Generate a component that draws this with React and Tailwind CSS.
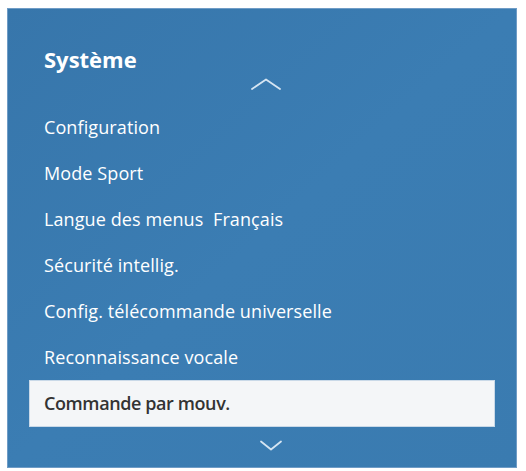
import React from 'react';

const ITEMS = [
  'Configuration',
  'Mode Sport',
  'Langue des menus  Français',
  'Sécurité intellig.',
  'Config. télécommande universelle',
  'Reconnaissance vocale',
];

const ChevronUp = () => (
  <svg width="32" height="12" viewBox="0 0 32 12" fill="none">
    <path d="M2 11 L16 1.5 L30 11" stroke="#d6e5f2" strokeWidth="1.8" strokeLinecap="round" strokeLinejoin="round" />
  </svg>
);

const ChevronDown = () => (
  <svg width="24" height="11" viewBox="0 0 24 11" fill="none">
    <path d="M2 1.5 L12 9.5 L22 1.5" stroke="#d6e5f2" strokeWidth="1.8" strokeLinecap="round" strokeLinejoin="round" />
  </svg>
);

export default function App() {
  return (
    <div className="w-[526px] h-[471px] bg-white pt-[8px] pl-[7px]" style={{ fontFamily: '"Open Sans", "Noto Sans", sans-serif' }}>
      <div className="w-[510px] h-[460px] bg-gradient-to-br from-[#3776ab] via-[#3b7db3] to-[#3a7bb0] border border-[#6f9cc6] flex flex-col">
        <div className="h-[95px] relative">
          <div className="absolute left-[36px] top-[34px] text-white text-[22px] font-bold leading-[32px]">Système</div>
          <div className="absolute left-[242px] top-[69px]">
            <ChevronUp />
          </div>
        </div>
        <div className="flex flex-col">
          {ITEMS.map((t) => (
            <div key={t} className="h-[46px] flex items-center pl-[36px] text-white text-[18px] tracking-[0.1px] whitespace-pre">
              {t}
            </div>
          ))}
          <div className="h-[47px] mx-[21px] bg-[#f4f6f8] border border-[#c9d9e8] flex items-center pl-[14px] text-[#333333] text-[18px] font-semibold tracking-[-0.4px]">
            Commande par mouv.
          </div>
        </div>
        <div className="flex justify-center pt-[13px] pl-[18px]">
          <ChevronDown />
        </div>
      </div>
    </div>
  );
}
